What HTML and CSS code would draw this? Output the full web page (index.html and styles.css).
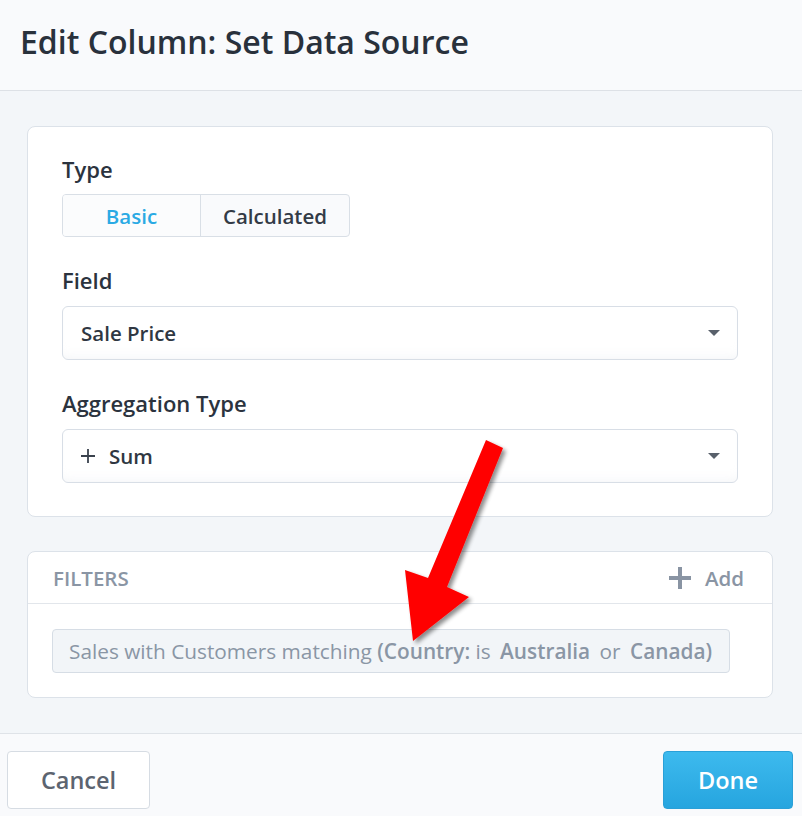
FILE: index.html
```html
<!DOCTYPE html>
<html>
<head>
<meta charset="utf-8">
<link rel="stylesheet" href="styles.css">
</head>
<body>
<div class="page">
  <header class="header">
    <h1 class="title">Edit Column: Set Data Source</h1>
  </header>
  <main class="main">
    <section class="card card-source">
      <div class="group">
        <div class="label">Type</div>
        <div class="segmented">
          <div class="seg seg-active">Basic</div>
          <div class="seg">Calculated</div>
        </div>
      </div>
      <div class="group">
        <div class="label">Field</div>
        <div class="select">
          <span class="select-text">Sale Price</span>
          <span class="caret"></span>
        </div>
      </div>
      <div class="group">
        <div class="label">Aggregation Type</div>
        <div class="select">
          <span class="select-text">
            <svg class="plus-icon" width="14" height="14" viewBox="0 0 14 14"><path d="M7 0v14M0 7h14" stroke="#3a424d" stroke-width="1.8" fill="none"/></svg>
            Sum
          </span>
          <span class="caret"></span>
        </div>
      </div>
    </section>
    <section class="card card-filters">
      <div class="filters-head">
        <span class="filters-title">FILTERS</span>
        <span class="add">
          <svg class="add-icon" width="22" height="22" viewBox="0 0 22 22"><path d="M11 0v22M0 11h22" stroke="#8994a3" stroke-width="4" fill="none"/></svg>
          <span>Add</span>
        </span>
      </div>
      <div class="filters-body">
        <div class="chip">Sales with Customers matching <b>(Country:</b> is <b class="val">Australia</b> or <b class="val-l">Canada)</b></div>
      </div>
    </section>
  </main>
  <footer class="footer">
    <button class="btn btn-cancel">Cancel</button>
    <button class="btn btn-done">Done</button>
  </footer>
  <svg class="arrow" width="802" height="816" viewBox="0 0 802 816">
    <defs>
      <filter id="sh" x="-20%" y="-20%" width="140%" height="140%">
        <feGaussianBlur in="SourceAlpha" stdDeviation="2"/>
        <feOffset dx="3" dy="3" result="b"/>
        <feComponentTransfer><feFuncA type="linear" slope="0.45"/></feComponentTransfer>
        <feMerge><feMergeNode/><feMergeNode in="SourceGraphic"/></feMerge>
      </filter>
    </defs>
    <polygon points="486,440 503,448 447,587 469,597 413,641 405,570 428,578" fill="#ff0000" filter="url(#sh)"/>
  </svg>
</div>
</body>
</html>
```
FILE: styles.css
```css
* { box-sizing: border-box; }
html, body { margin: 0; padding: 0; }
body {
  font-family: "Open Sans", "Liberation Sans", sans-serif;
  color: #2b333e;
  background: #f3f6f9;
}
.page {
  position: relative;
  width: 802px;
  height: 816px;
  overflow: hidden;
  display: flex;
  flex-direction: column;
}
.header {
  height: 91px;
  background: #f9fafc;
  border-bottom: 1px solid #dde1e6;
  padding: 22px 20px 0;
}
.title {
  margin: 0;
  font-size: 32px;
  line-height: 40px;
  font-weight: 600;
  color: #29313c;
}
.main {
  flex: 1;
  background: #f3f6f9;
  padding: 35px 29px 0 27px;
  display: flex;
  flex-direction: column;
  gap: 34px;
}
.card {
  background: #fff;
  border: 1px solid #dce2e9;
  border-radius: 8px;
}
.card-source {
  padding: 29px 34px 33px;
  display: flex;
  flex-direction: column;
  gap: 30px;
}
.label {
  font-size: 22px;
  line-height: 26px;
  font-weight: 600;
  color: #2b333e;
  margin-bottom: 13px;
}
.group:first-child .label { margin-bottom: 12px; }
.segmented {
  display: flex;
  width: 288px;
  height: 43px;
  border: 1px solid #d9dfe6;
  border-radius: 4px;
  background: #f9fafc;
  overflow: hidden;
}
.seg {
  display: flex;
  align-items: center;
  justify-content: center;
  font-size: 20.5px;
  font-weight: 600;
  color: #333b46;
}
.seg-active {
  width: 138px;
  border-right: 1px solid #d9dfe6;
  color: #2aaae4;
  background: #fbfcfd;
}
.seg:not(.seg-active) { flex: 1; }
.select {
  height: 54px;
  border: 1px solid #d8dee6;
  border-radius: 6px;
  background: #fff;
  box-shadow: inset 0 -10px 12px -10px rgba(200, 208, 218, 0.25);
  display: flex;
  align-items: center;
  justify-content: space-between;
  padding: 0 17px 0 18px;
}
.select-text {
  display: flex;
  align-items: center;
  font-size: 20.5px;
  font-weight: 600;
  color: #2f3742;
}
.plus-icon { margin-right: 14px; }
.caret {
  width: 0;
  height: 0;
  border-left: 6px solid transparent;
  border-right: 6px solid transparent;
  border-top: 6px solid #58606b;
}
.filters-head {
  height: 52px;
  border-bottom: 1px solid #e2e6eb;
  display: flex;
  align-items: center;
  justify-content: space-between;
  padding: 0 28px 0 25px;
}
.filters-title {
  font-size: 20.5px;
  font-weight: 600;
  color: #8a95a4;
}
.add {
  display: flex;
  align-items: center;
  font-size: 20.5px;
  font-weight: 600;
  color: #8a95a4;
}
.add-icon { margin-right: 14px; }
.filters-body {
  padding: 25px 24px 24px;
}
.chip {
  display: inline-flex;
  align-items: center;
  height: 44px;
  padding: 0 17px 0 16px;
  background: #f2f5f8;
  border: 1px solid #d6dde5;
  border-radius: 4px;
  font-size: 20.8px;
  color: #8a96a5;
  white-space: pre;
}
.chip b { font-weight: 600; }
.chip .val { margin: 0 4px; }
.chip .val-l { margin-left: 4px; }
.footer {
  height: 83px;
  background: #f9fafc;
  border-top: 1px solid #dfe3e8;
  display: flex;
  align-items: flex-start;
  justify-content: space-between;
  padding: 17px 9px 0 7px;
}
.btn {
  height: 58px;
  border-radius: 4px;
  font-family: "Open Sans", "Liberation Sans", sans-serif;
  font-size: 23.5px;
  font-weight: 600;
}
.btn-cancel {
  width: 143px;
  background: #fff;
  border: 1px solid #d6dce3;
  color: #5c6470;
}
.btn-done {
  width: 130px;
  background: linear-gradient(#3dbaee, #26a5df);
  border: 1px solid #2aa0d8;
  color: #fff;
}
.arrow {
  position: absolute;
  left: 0;
  top: 0;
  pointer-events: none;
}
```
